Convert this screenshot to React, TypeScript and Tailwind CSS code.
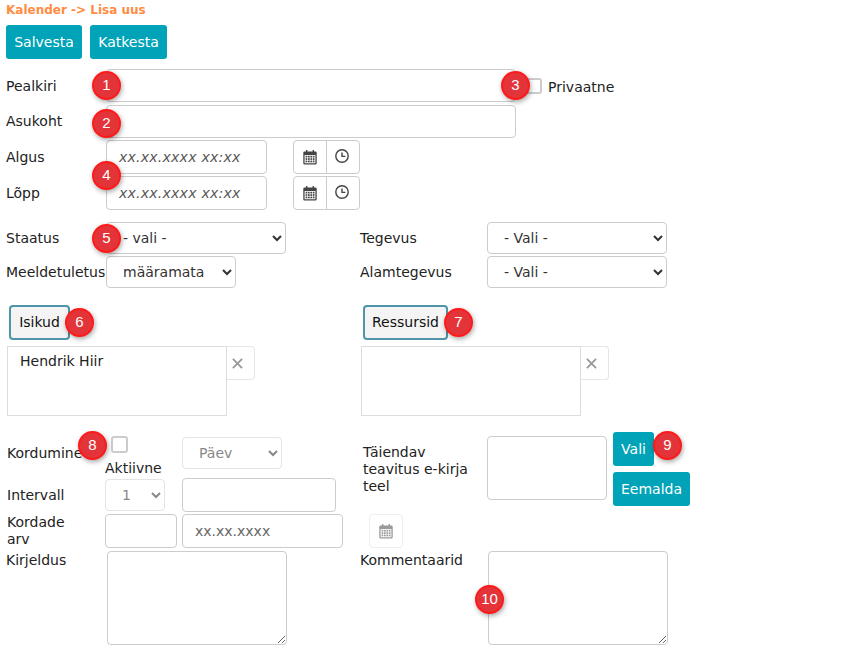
import React from 'react';

const font = "font-['Verdana','DejaVu_Sans',sans-serif]";
const input = 'rounded-[4px] border border-[#cccccc] bg-white';
const label = 'text-[14px] leading-[17px] text-[#222222]';
const tealBtn = 'rounded-[3px] bg-[#00a3b7] text-[14px] text-white';

const CalendarIcon = ({ color = '#444444' }: { color?: string }) => (
    <svg width="14" height="15" viewBox="0 0 14 15" fill={color}>
        <rect x="3" y="0" width="1.4" height="3" />
        <rect x="9.6" y="0" width="1.4" height="3" />
        <path fillRule="evenodd" d="M1.5 1.5h11A1.2 1.2 0 0 1 13.7 2.7v10.6a1.2 1.2 0 0 1-1.2 1.2h-11A1.2 1.2 0 0 1 .3 13.3V2.7A1.2 1.2 0 0 1 1.5 1.5zM1.6 5v8.2h10.8V5z" />
        {[5.8, 8.2, 10.6].map((y) =>
            [2.6, 5, 7.4, 9.8].map((x) => <rect key={`${x}-${y}`} x={x} y={y} width="1.7" height="1.7" />)
        )}
    </svg>
);

const ClockIcon = () => (
    <svg width="14" height="14" viewBox="0 0 14 14" fill="none" stroke="#444444" strokeWidth="1.4">
        <circle cx="7" cy="7" r="6.2" />
        <path d="M7 3.4V7.4H10.4" />
    </svg>
);

const DateButtons = () => (
    <div className="ml-[26px] flex h-[34px] w-[67px] rounded-[4px] border border-[#cccccc]">
        <div className="flex w-[33px] items-center justify-center border-r border-[#cccccc] pr-[1px]">
            <CalendarIcon />
        </div>
        <div className="flex flex-1 items-center justify-center pb-[2px] pr-[2px]">
            <ClockIcon />
        </div>
    </div>
);

const DateRow = ({ text, className }: { text: string; className?: string }) => (
    <div className={`flex items-center ${className ?? ''}`}>
        <div className={`w-[100px] ${label}`}>{text}</div>
        <div className={`flex h-[34px] w-[161px] items-center pl-[12px] pt-[1px] text-[14px] italic tracking-[0.25px] text-[#555555] ${input}`}>
            xx.xx.xxxx xx:xx
        </div>
        <DateButtons />
    </div>
);

const Select = ({ value, className, disabled }: { value: string; className: string; disabled?: boolean }) => (
    <select
        disabled={disabled}
        defaultValue={value}
        className={`h-[32px] rounded-[4px] border bg-white pl-[12px] text-[14px] ${
            disabled ? 'border-[#e4e4e4] text-[#888888] opacity-100' : 'border-[#cccccc] text-[#333333]'
        } ${className}`}
    >
        <option>{value}</option>
    </select>
);

const TabButton = ({ text, className }: { text: string; className: string }) => (
    <div
        className={`flex h-[35px] items-center justify-center rounded-[4px] border-2 border-[#4f94a8] bg-[#f4f4f4] text-[14px] text-[#111111] ${className}`}
    >
        {text}
    </div>
);

const ListBox = ({ name }: { name?: string }) => (
    <div className="flex items-start">
        <div className="h-[70px] w-[220px] border border-[#dddddd] px-[12px] py-[6px] text-[14px] leading-[17px] text-[#222222]">
            {name}
        </div>
        <div className="flex h-[34px] w-[28px] items-center justify-center rounded-r-[4px] border border-l-0 border-[#e6e6e6] pr-[6px]">
            <svg width="11" height="11" viewBox="0 0 12 12" stroke="#999999" strokeWidth="2">
                <path d="M1 1L11 11M11 1L1 11" />
            </svg>
        </div>
    </div>
);

const Badge = ({ n, className }: { n: number; className: string }) => (
    <div
        className={`absolute flex h-[29px] w-[29px] items-center justify-center rounded-full border-2 border-[#ff1a1a] bg-[#e33539] font-['Liberation_Sans',sans-serif] text-[15px] text-white shadow-[1px_2px_5px_rgba(0,0,0,0.35)] ${className}`}
    >
        {n}
    </div>
);

export default function App() {
    return (
        <div className={`relative h-[651px] w-[864px] overflow-hidden bg-white ${font}`}>
            <div className="flex flex-col px-[6px] pt-[3px]">
                <div className="text-[12px] font-bold leading-[14px] text-[#ff8c42]">Kalender -&gt; Lisa uus</div>

                <div className="mt-[8px] flex gap-[8px]">
                    <div className={`flex h-[34px] w-[76px] items-center justify-center ${tealBtn}`}>Salvesta</div>
                    <div className={`flex h-[34px] w-[77px] items-center justify-center ${tealBtn}`}>Katkesta</div>
                </div>

                <div className="mt-[10px] flex items-center">
                    <div className={`mt-[2px] w-[100px] ${label}`}>Pealkiri</div>
                    <div className={`h-[33px] w-[410px] ${input}`} />
                    <div className="ml-[10px] h-[16px] w-[16px] rounded-[3px] border-2 border-[#cccccc]" />
                    <div className={`ml-[6px] mt-[3px] ${label}`}>Privaatne</div>
                </div>

                <div className="mt-[3px] flex items-center">
                    <div className={`w-[100px] ${label}`}>Asukoht</div>
                    <div className={`h-[33px] w-[410px] ${input}`} />
                </div>

                <DateRow text="Algus" className="mt-[2px]" />
                <DateRow text="Lõpp" className="mt-[2px]" />

                <div className="mt-[12px] flex">
                    <div className="flex w-[354px] flex-col gap-[2px]">
                        <div className="flex items-center">
                            <div className={`w-[100px] ${label}`}>Staatus</div>
                            <Select value="- vali -" className="w-[180px]" />
                        </div>
                        <div className="flex items-center">
                            <div className={`w-[100px] ${label}`}>Meeldetuletus</div>
                            <Select value="määramata" className="w-[130px]" />
                        </div>
                    </div>
                    <div className="flex flex-col gap-[2px]">
                        <div className="flex items-center">
                            <div className={`w-[127px] ${label}`}>Tegevus</div>
                            <Select value="- Vali -" className="w-[180px]" />
                        </div>
                        <div className="flex items-center">
                            <div className={`w-[127px] ${label}`}>Alamtegevus</div>
                            <Select value="- Vali -" className="w-[180px]" />
                        </div>
                    </div>
                </div>

                <div className="mt-[17px] flex">
                    <div className="w-[354px] pl-[1px]">
                        <TabButton text="Isikud" className="ml-[2px] w-[61px]" />
                        <div className="mt-[6px]">
                            <ListBox name="Hendrik Hiir" />
                        </div>
                    </div>
                    <div className="pl-[1px]">
                        <TabButton text="Ressursid" className="ml-[2px] w-[85px]" />
                        <div className="mt-[6px]">
                            <ListBox />
                        </div>
                    </div>
                </div>

                <div className="mt-[20px] flex">
                    <div className="w-[354px] pl-[1px]">
                        <div className="flex">
                            <div className={`mt-[9px] w-[98px] ${label}`}>Kordumine</div>
                            <div className="w-[77px]">
                                <div className="ml-[6px] h-[17px] w-[17px] rounded-[3px] border-2 border-[#cccccc]" />
                                <div className={`mt-[7px] ${label}`}>Aktiivne</div>
                            </div>
                            <Select value="Päev" disabled className="mt-[1px] w-[100px]" />
                        </div>
                        <div className="mt-[1px] flex items-center">
                            <div className={`w-[98px] ${label}`}>Intervall</div>
                            <Select value="1" disabled className="w-[60px]" />
                            <div className={`ml-[17px] h-[34px] w-[154px] ${input}`} />
                        </div>
                        <div className="mt-[2px] flex w-[396px] items-center">
                            <div className={`w-[98px] pr-[20px] ${label}`}>Kordade arv</div>
                            <div className={`h-[34px] w-[72px] ${input}`} />
                            <div className={`ml-[5px] flex h-[34px] w-[161px] items-center pl-[12px] text-[14px] text-[#666666] ${input}`}>
                                xx.xx.xxxx
                            </div>
                            <div className="ml-[26px] flex h-[34px] w-[34px] items-center justify-center rounded-[4px] border border-[#eeeeee]">
                                <CalendarIcon color="#999999" />
                            </div>
                        </div>
                    </div>
                    <div className="flex items-start pl-[3px]">
                        <div className={`mt-[8px] w-[124px] pr-[12px] ${label}`}>Täiendav teavitus e-kirja teel</div>
                        <div className={`h-[64px] w-[120px] ${input}`} />
                        <div className="-mt-[4px] ml-[6px] flex flex-col items-start gap-[6px]">
                            <div className={`flex h-[34px] w-[41px] items-center justify-center ${tealBtn}`}>Vali</div>
                            <div className={`flex h-[34px] w-[77px] items-center justify-center ${tealBtn}`}>Eemalda</div>
                        </div>
                    </div>
                </div>

                <div className="mt-[3px] flex">
                    <div className="flex w-[354px]">
                        <div className={`mt-[1px] w-[101px] ${label}`}>Kirjeldus</div>
                        <textarea className={`h-[94px] w-[180px] ${input}`} />
                    </div>
                    <div className="flex">
                        <div className={`mt-[1px] w-[128px] ${label}`}>Kommentaarid</div>
                        <textarea className={`h-[94px] w-[180px] ${input}`} />
                    </div>
                </div>
            </div>

            {/* numbered markers on top of the form */}
            <Badge n={1} className="left-[92px] top-[71px]" />
            <Badge n={2} className="left-[92px] top-[109px]" />
            <Badge n={3} className="left-[501px] top-[71px]" />
            <Badge n={4} className="left-[92px] top-[161px]" />
            <Badge n={5} className="left-[92px] top-[224px]" />
            <Badge n={6} className="left-[65px] top-[308px]" />
            <Badge n={7} className="left-[444px] top-[308px]" />
            <Badge n={8} className="left-[78px] top-[431px]" />
            <Badge n={9} className="left-[653px] top-[431px]" />
            <Badge n={10} className="left-[475px] top-[585px]" />
        </div>
    );
}
